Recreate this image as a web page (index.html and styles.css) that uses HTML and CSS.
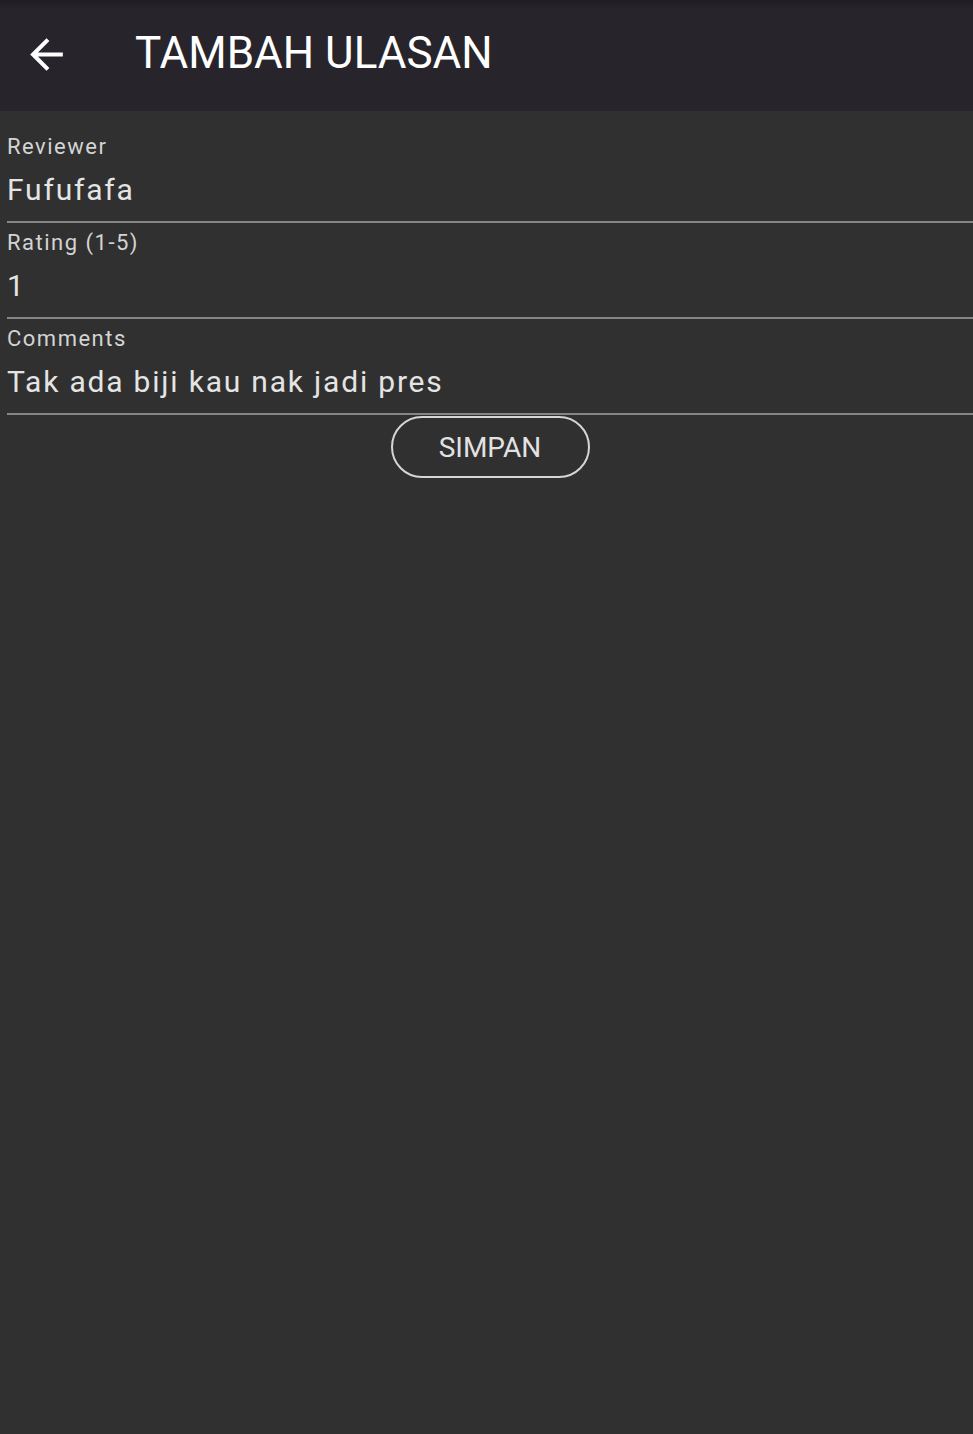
FILE: index.html
```html
<!DOCTYPE html>
<html lang="id">
<head>
<meta charset="utf-8">
<title>Tambah Ulasan</title>
<link rel="stylesheet" href="styles.css">
</head>
<body>
<header class="appbar">
  <button class="back" aria-label="Kembali">
    <svg viewBox="0 0 24 24" width="49" height="49"><path fill="#ffffff" d="M20 11H7.83l5.59-5.59L12 4l-8 8 8 8 1.41-1.41L7.83 13H20v-2z"/></svg>
  </button>
  <h1 class="title">TAMBAH ULASAN</h1>
</header>
<main class="form">
  <div class="field">
    <div class="label">Reviewer</div>
    <div class="value">Fufufafa</div>
  </div>
  <div class="field">
    <div class="label">Rating (1-5)</div>
    <div class="value">1</div>
  </div>
  <div class="field">
    <div class="label">Comments</div>
    <div class="value">Tak ada biji kau nak jadi pres</div>
  </div>
  <div class="actions">
    <button class="save">SIMPAN</button>
  </div>
</main>
</body>
</html>
```
FILE: styles.css
```css
html, body {
  margin: 0;
  padding: 0;
  background: #303030;
  font-family: Roboto, "Liberation Sans", sans-serif;
  min-height: 100%;
}

.appbar {
  height: 111px;
  background: linear-gradient(#1f1e23 0px, #27252b 10px, #27252b 100%);
  display: flex;
  align-items: center;
}

.back {
  width: 49px;
  height: 49px;
  margin-left: 22px;
  margin-bottom: 3px;
  padding: 0;
  border: 0;
  background: none;
  display: flex;
}

.title {
  margin: 0 0 6px 64px;
  font-size: 44px;
  font-weight: 400;
  color: #ffffff;
  line-height: 1;
}

.form {
  padding: 16px 0 0 7px;
}

.field {
  padding: 5px 0 11px 0;
  border-bottom: 2px solid #858585;
}

.label {
  font-size: 22px;
  line-height: 30px;
  color: #d4d4d4;
  letter-spacing: 1.5px;
}

.value {
  margin-top: 8px;
  font-size: 30px;
  line-height: 40px;
  color: #e4e4e4;
  letter-spacing: 1.8px;
}

.actions {
  display: flex;
  justify-content: center;
  padding-top: 1px;
}

.save {
  width: 199px;
  height: 62px;
  border: 2px solid #d6d6d6;
  border-radius: 31px;
  background: transparent;
  color: #e2e2e2;
  font-family: Roboto, "Liberation Sans", sans-serif;
  font-size: 28px;
  padding: 0;
}
```
